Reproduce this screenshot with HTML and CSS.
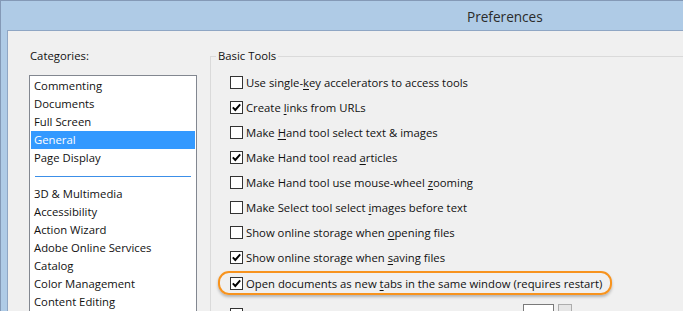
FILE: index.html
```html
<!DOCTYPE html>
<html lang="en">
<head>
  <meta charset="UTF-8">
  <title>Preferences</title>
  <link rel="stylesheet" href="styles.css">
</head>
<body>
  <div class="window">
    <div class="titlebar">Preferences</div>
    <div class="client">
      <!-- 左侧分类 -->
      <div class="categories">
        <div class="cat-label">Categories:</div>
        <div class="listbox">
          <div class="item">Commenting</div>
          <div class="item">Documents</div>
          <div class="item">Full Screen</div>
          <div class="item selected">General</div>
          <div class="item">Page Display</div>
          <div class="separator"></div>
          <div class="item">3D &amp; Multimedia</div>
          <div class="item">Accessibility</div>
          <div class="item">Action Wizard</div>
          <div class="item">Adobe Online Services</div>
          <div class="item">Catalog</div>
          <div class="item">Color Management</div>
          <div class="item">Content Editing</div>
        </div>
      </div>

      <!-- 右侧选项 -->
      <fieldset class="group">
        <legend>Basic Tools</legend>
        <div class="opt"><span class="box"></span><span>Use single-<u>k</u>ey accelerators to access tools</span></div>
        <div class="opt"><span class="box checked"><svg viewBox="0 0 11 11"><path d="M1.8 5.4 L4.3 8 L9.2 2.4"/></svg></span><span>Create <u>l</u>inks from URLs</span></div>
        <div class="opt"><span class="box"></span><span>Make <u>H</u>and tool select text &amp; images</span></div>
        <div class="opt"><span class="box checked"><svg viewBox="0 0 11 11"><path d="M1.8 5.4 L4.3 8 L9.2 2.4"/></svg></span><span>Make Hand tool read <u>a</u>rticles</span></div>
        <div class="opt"><span class="box"></span><span>Make Hand tool use mouse-wheel <u>z</u>ooming</span></div>
        <div class="opt"><span class="box"></span><span>Make Select tool select <u>i</u>mages before text</span></div>
        <div class="opt"><span class="box"></span><span>Show online storage when <u>o</u>pening files</span></div>
        <div class="opt"><span class="box checked"><svg viewBox="0 0 11 11"><path d="M1.8 5.4 L4.3 8 L9.2 2.4"/></svg></span><span>Show online storage when <u>s</u>aving files</span></div>
        <div class="opt highlight"><span class="box checked"><svg viewBox="0 0 11 11"><path d="M1.8 5.4 L4.3 8 L9.2 2.4"/></svg></span><span>Open documents as new <u>t</u>abs in the same window (requires restart)</span></div>
        <div class="opt last">
          <span class="box"></span>
          <span class="opt-label"></span>
          <span class="num"></span>
          <span class="spin"></span>
        </div>
      </fieldset>
    </div>
  </div>
</body>
</html>
```

FILE: styles.css
```css
/* 全局样式 */
body {
  margin: 0;
  padding: 0;
  overflow: hidden;
  background: #afcbe6;
  font-family: "Open Sans", "Noto Sans", sans-serif;
  font-size: 11.3px;
  color: #111;
}

/* 窗口外框 */
.window {
  height: 100vh;
  border-top: 1px solid #8499b6;
  border-left: 1px solid #8499b6;
}
.titlebar {
  height: 29px;
  line-height: 31px;
  padding-left: 466px;
  font-size: 13.6px;
  color: #2b2b2b;
}
.client {
  height: 100%;
  margin-left: 6px;
  padding-top: 17px;
  display: flex;
  align-items: flex-start;
  background: #f0f0f0;
  border-top: 1px solid #8fa6c4;
  border-left: 1px solid #8fa6c4;
}

/* 分类列表 */
.categories {
  flex: none;
  width: 168px;
  margin-left: 21px;
}
.cat-label {
  height: 16px;
  line-height: 16px;
  padding-left: 1px;
  margin-bottom: 11px;
}
.listbox {
  height: 300px;
  padding: 1px;
  background: #fff;
  border: 1px solid #828790;
}
.item {
  height: 18px;
  line-height: 18px;
  padding-left: 3px;
  white-space: nowrap;
}
.item.selected {
  background: #3399ff;
  color: #fff;
}
.separator {
  height: 18px;
  margin: 0 4px;
  display: flex;
  align-items: center;
}
.separator::before {
  content: "";
  flex: 1;
  height: 1px;
  background: #3c8fe8;
}

/* 基本工具分组 */
.group {
  flex: none;
  width: 600px;
  height: 400px;
  margin: 0 0 0 13px;
  padding: 6px 0 0 19px;
  border: 1px solid #dadada;
}
.group legend {
  height: 16px;
  line-height: 16px;
  margin-left: -14px;
  padding: 0 2px;
}
.opt {
  height: 25px;
  display: flex;
  align-items: center;
  white-space: nowrap;
}
.box {
  width: 11px;
  height: 11px;
  margin-right: 3px;
  border: 1px solid #333;
  background: #fff;
  flex: none;
}
.box svg {
  display: block;
  width: 11px;
  height: 11px;
}
.box path {
  fill: none;
  stroke: #000;
  stroke-width: 1.9;
}
u {
  text-decoration-thickness: 1px;
  text-underline-offset: 2px;
}

/* 高亮提示框 */
.opt.highlight {
  width: fit-content;
  margin-top: 1px;
  position: relative;
}
.opt.highlight::after {
  content: "";
  position: absolute;
  top: 0;
  bottom: 1px;
  left: -12px;
  right: -10px;
  border: 2.5px solid #f7931e;
  border-radius: 11px;
  box-shadow: 0 2px 3px rgba(0, 0, 0, .25);
}

/* 最后一行（被裁掉） */
.opt.last {
  margin-top: 6px;
  align-items: flex-start;
}
.opt.last .box {
  margin-top: 6px;
}
.opt-label {
  width: 277px;
}
.num {
  width: 31px;
  height: 20px;
  margin-top: 2px;
  border: 1px solid #7a7a7a;
  background: #fff;
  box-sizing: border-box;
}
.spin {
  width: 14px;
  height: 20px;
  margin: 2px 0 0 4px;
  border: 1px solid #adadad;
  background: #e6e6e6;
  box-sizing: border-box;
}
```
